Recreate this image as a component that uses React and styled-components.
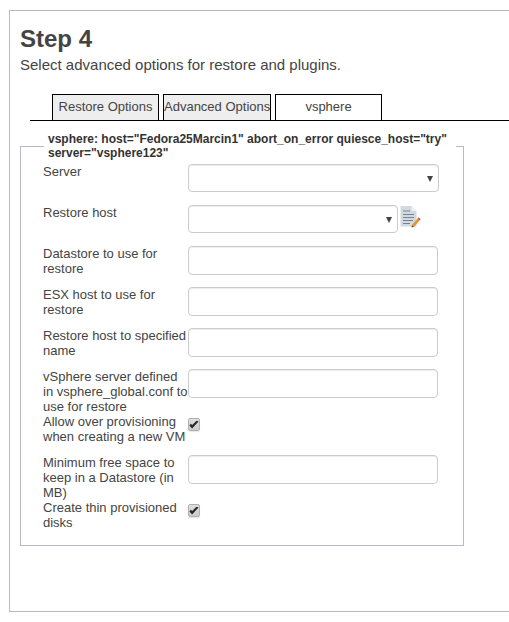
import React from 'react';
import styled, { createGlobalStyle } from 'styled-components';

const Global = createGlobalStyle`
  html, body { margin: 0; padding: 0; background: #fff; overflow: hidden; }
  body { font-family: "Liberation Sans", Arial, sans-serif; color: #444; }
`;
const Page = styled.div`
  width: 509px; height: 622px; padding: 10px 0 0 9px; box-sizing: border-box; overflow: hidden;
`;
const Panel = styled.main`
  width: 560px; height: 602px; box-sizing: border-box;
  border: 1px solid #b8b8cc; padding: 12px 0 0 10px;
`;
const Title = styled.h1`
  margin: 0; font-size: 24px; line-height: 32px; font-weight: 700; color: #444;
`;
const Subtitle = styled.p`
  margin: 0; font-size: 15px; line-height: 20px; color: #444;
`;
const TabBar = styled.div`
  display: flex; gap: 4px; margin: 19px 0 0 10px; padding-left: 22px; height: 27px;
  box-sizing: border-box; border-bottom: 1px solid #000; width: 520px;
`;
const Tab = styled.div`
  width: ${p => p.$w}px; height: 26px; box-sizing: border-box; border: 1px solid #000;
  border-bottom: none; background: ${p => p.$active ? '#fff' : '#eee'};
  font-size: 13px; line-height: 24px; text-align: center; color: #444; white-space: nowrap;
`;
const Field = styled.fieldset`
  margin: 11px 0 0 0; padding: 0 0 4px 22px; width: 444px; box-sizing: border-box;
  border: 1px solid #b8b8cc; min-inline-size: 0;
`;
const Legend = styled.legend`
  margin: 0 0 4px 1px; padding: 0 4px; width: 412px; box-sizing: border-box;
  font-size: 12px; line-height: 14px; font-weight: 700; color: #333;
`;
const Row = styled.div`
  display: flex; align-items: flex-start; min-height: 41px;
`;
const Label = styled.label`
  width: 145px; flex: none; font-size: 13px; line-height: 15px; color: #444;
`;
const TextInput = styled.input`
  width: 250px; height: 29px; box-sizing: border-box; margin: 0; padding: 0 6px;
  background: #fff; border: 1px solid #ccc; border-radius: 4px;
  box-shadow: inset 0 1px 1px rgba(0,0,0,.075);
`;
const SelectWrap = styled.div`
  position: relative; width: ${p => p.$w}px; height: 28px; box-sizing: border-box;
  background: #fff; border: 1px solid #ccc; border-radius: 4px;
  box-shadow: inset 0 1px 1px rgba(0,0,0,.075);
  &::after {
    content: ""; position: absolute; right: 5px; top: 11px;
    border-left: 3px solid transparent; border-right: 3px solid transparent; border-top: 6px solid #444;
  }
`;
const Combo = styled.div`
  display: flex; align-items: flex-start; gap: 2px;
`;
const CheckBox = styled.span`
  display: flex; align-items: center; justify-content: center;
  width: 12px; height: 13px; margin-top: 4px; box-sizing: border-box;
  background: linear-gradient(#dedede, #cbcbcb); border: 1px solid #b0b0b0; border-radius: 2px;
  box-shadow: 0 1px 1px rgba(0,0,0,.1);
`;

const Check = () => (
  <svg width="10" height="9" viewBox="0 0 9 8" aria-hidden="true">
    <path d="M0.4 4.8 L2.8 7.6 L8.6 1.2 L6.8 0.6 L2.9 4.4 L1.6 3.4 Z" fill="#262626" />
  </svg>
);
const NoteIcon = () => (
  <svg width="21" height="24" viewBox="0 0 21 24" aria-hidden="true">
    <path d="M0.5 1 H11.5 L16.5 6 V21.5 H0.5 Z" fill="#d2dae1" />
    <path d="M11.5 1 V6 H16.5 Z" fill="#eef1f4" />
    <path d="M3 6 H10 M3 9.5 H14 M3 12.5 H14 M3 15.5 H13 M3 18.5 H10" stroke="#76838f" strokeWidth="1.1" />
    <path d="M12 20 L18.5 12.5 L20.5 14.2 L14.5 21.5 L11.5 22.5 Z" fill="#e8922e" />
    <path d="M18.5 12.5 L20.5 14.2 L19.7 15.2 L17.7 13.5 Z" fill="#cf4f2c" />
    <path d="M12 20.6 L14 21.6 L11.5 22.5 Z" fill="#5a4a38" />
  </svg>
);

const Input = () => <TextInput type="text" />;
const Tick = () => <CheckBox role="checkbox" aria-checked="true"><Check /></CheckBox>;

export default function App() {
  return (
    <Page>
      <Global />
      <Panel>
        <Title>Step 4</Title>
        <Subtitle>Select advanced options for restore and plugins.</Subtitle>
        <TabBar>
          <Tab $w={107}>Restore Options</Tab>
          <Tab $w={108}>Advanced Options</Tab>
          <Tab $w={107} $active>vsphere</Tab>
        </TabBar>
        <Field>
          <Legend>vsphere: host="Fedora25Marcin1" abort_on_error quiesce_host="try" server="vsphere123"</Legend>
          <Row><Label>Server</Label><SelectWrap $w={251} /></Row>
          <Row><Label>Restore host</Label><Combo><SelectWrap $w={210} /><NoteIcon /></Combo></Row>
          <Row><Label>Datastore to use for restore</Label><Input /></Row>
          <Row><Label>ESX host to use for restore</Label><Input /></Row>
          <Row><Label>Restore host to specified name</Label><Input /></Row>
          <Row><Label>vSphere server defined in vsphere_global.conf to use for restore</Label><Input /></Row>
          <Row><Label>Allow over provisioning when creating a new VM</Label><Tick /></Row>
          <Row><Label>Minimum free space to keep in a Datastore (in MB)</Label><Input /></Row>
          <Row><Label>Create thin provisioned disks</Label><Tick /></Row>
        </Field>
      </Panel>
    </Page>
  );
}
